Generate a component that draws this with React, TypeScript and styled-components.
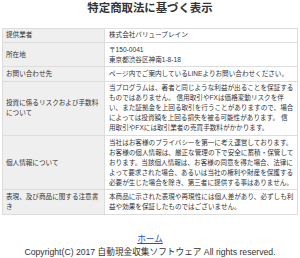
import React from "react";
import styled, { createGlobalStyle } from "styled-components";

const Global = createGlobalStyle`
  html, body { margin: 0; padding: 0; background: #fff; }
  body {
    font-family: "Liberation Sans", "Noto Sans CJK JP", sans-serif;
    color: #333;
    line-height: 1.5;
  }
`;

const Page = styled.div`
  width: 300px;
  padding: 0 2px;
  box-sizing: border-box;
`;

const Title = styled.h1`
  margin: 0 0 10.5px;
  font-size: 11.4px;
  line-height: 17px;
  font-weight: bold;
  text-align: center;
  color: #333;
`;

const Table = styled.table`
  width: 100%;
  border-collapse: collapse;
  table-layout: fixed;
  font-size: 6.6px;
  line-height: 10px;
  color: #333;
`;

const Head = styled.th`
  width: 95px;
  padding: 1.7px 3px;
  background: #efefef;
  border: 1px solid #dddddd;
  font-weight: normal;
  text-align: left;
  vertical-align: middle;
  white-space: nowrap;
`;

const Cell = styled.td`
  padding: 1.7px 3px 1.7px 4px;
  background: #fff;
  border: 1px solid #dddddd;
  text-align: left;
  vertical-align: top;
  white-space: nowrap;
`;

const Footer = styled.footer`
  margin-top: 18px;
  text-align: center;
  font-size: 8.67px;
  line-height: 13px;
  color: #333;
`;

const HomeLink = styled.a`
  color: #1e4fd0;
  text-decoration: underline;
`;

type Row = { head: string[]; body: string[] };

const rows: Row[] = [
  { head: ["提供業者"], body: ["株式会社バリュープレイン"] },
  { head: ["所在地"], body: ["〒150-0041", "東京都渋谷区神南1-8-18"] },
  { head: ["お問い合わせ先"], body: ["ページ内でご案内しているLINEよりお問い合わせください。"] },
  {
    head: ["投資に係るリスクおよび手数料", "について"],
    body: [
      "当プログラムは、著者と同じような利益が出ることを保証する",
      "ものではありません。 信用取引やFXは価格変動リスクを伴",
      "い、また証拠金を上回る取引を行うことがありますので、場合",
      "によっては投資額を上回る損失を被る可能性があります。 信",
      "用取引やFXには取引業者の売買手数料がかかります。",
    ],
  },
  {
    head: ["個人情報について"],
    body: [
      "当社はお客様のプライバシーを第一に考え運営しております。",
      "お客様の個人情報は、厳正な管理の下で安全に蓄積・保管して",
      "おります。当該個人情報は、お客様の同意を得た場合、法律に",
      "よって要求された場合、あるいは当社の権利や財産を保護する",
      "必要が生じた場合を除き、第三者に提供する事はありません。",
    ],
  },
  {
    head: ["表現、及び商品に関する注意書", "き"],
    body: [
      "本商品に示された表現や再現性には個人差があり、必ずしも利",
      "益や効果を保証したものではございません。",
    ],
  },
];

const Lines: React.FC<{ lines: string[] }> = ({ lines }) => (
  <>
    {lines.map((l, i) => (
      <React.Fragment key={i}>
        {i > 0 && <br />}
        {l}
      </React.Fragment>
    ))}
  </>
);

export default function App() {
  return (
    <Page>
      <Global />
      <Title>特定商取法に基づく表示</Title>
      <Table>
        <tbody>
          {rows.map((r, i) => (
            <tr key={i}>
              <Head>
                <Lines lines={r.head} />
              </Head>
              <Cell>
                <Lines lines={r.body} />
              </Cell>
            </tr>
          ))}
        </tbody>
      </Table>
      <Footer>
        <HomeLink href="#">ホーム</HomeLink>
        <br />
        Copyright(C) 2017 自動現金収集ソフトウェア All rights reserved.
      </Footer>
    </Page>
  );
}
